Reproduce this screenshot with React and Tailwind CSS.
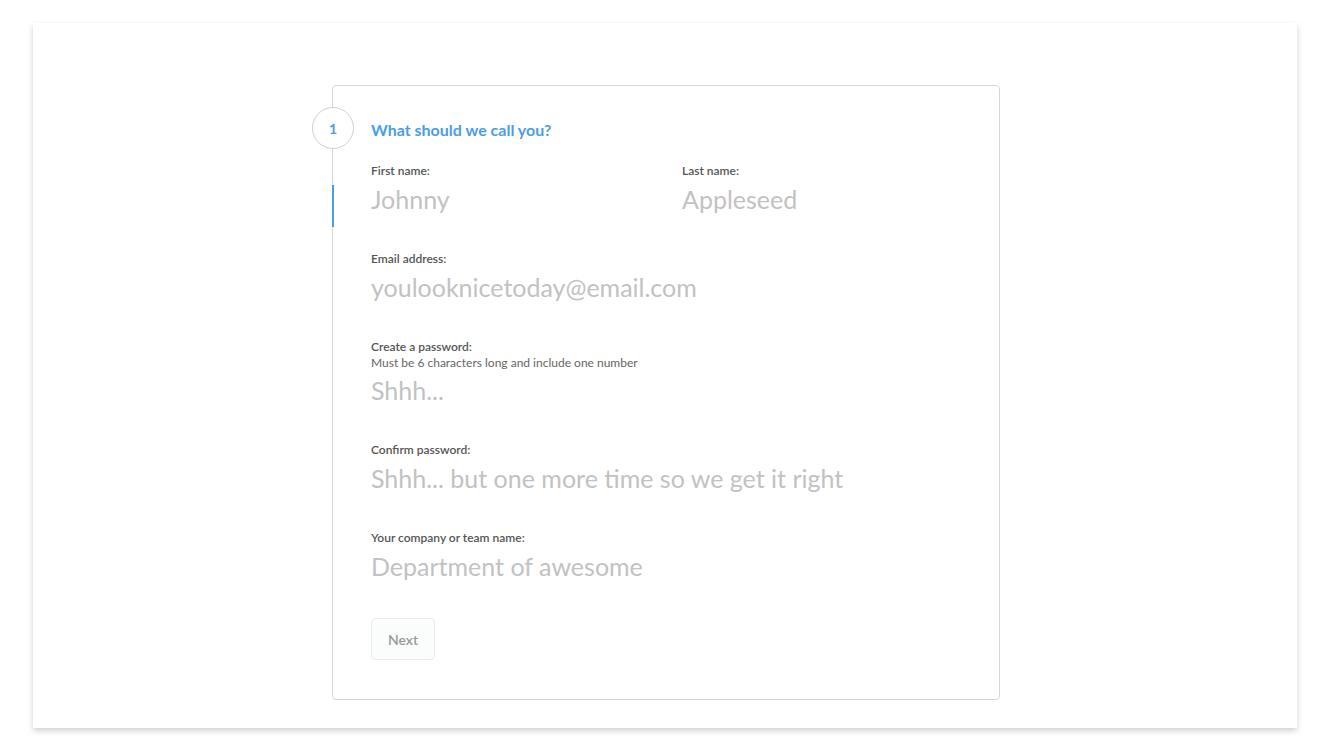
import React from "react";

const Field = ({ label, hint, placeholder, type = "text" }) => {
  return (
    <div className="relative flex flex-col">
      <label className="text-[12px] leading-[16px] font-semibold text-[#555]">{label}</label>
      {hint && <p className="text-[12px] leading-[15px] text-[#666]">{hint}</p>}
      <input
        type={type}
        placeholder={placeholder}
        className="mt-[6px] h-[42px] pb-[14px] w-full bg-transparent text-[25px] text-[#444] placeholder:text-[#c2c2c2] outline-none"
      />
    </div>
  );
};

export default function App() {
  return (
    <div
      className="min-h-[750px] bg-white pt-[23px] pl-[33px]"
      style={{ fontFamily: "Lato, 'Open Sans', sans-serif" }}
    >
      <div className="w-[1264px] h-[705px] bg-white shadow-[0_3px_6px_rgba(0,0,0,0.18)] pt-[62px]">
        {/* Signup step box */}
        <div className="relative ml-[299px] w-[668px] border border-[#d6d6d6] rounded-[4px] pl-[38px] pr-[30px] pt-[34px] pb-[39px]">
          {/* Step number */}
          <div className="absolute left-[-21px] top-[21px] w-[42px] h-[42px] rounded-full border border-[#d0d0d0] bg-white flex items-center justify-center text-[14px] font-bold text-[#4a9de6]">
            1
          </div>
          {/* Active field marker */}
          <span className="absolute left-[-1px] top-[99px] w-[2px] h-[42px] bg-[#4a9de6]" />

          <h2 className="text-[16px] leading-[20px] font-bold text-[#4a9de6]">What should we call you?</h2>

          <div className="mt-[23px] flex flex-col gap-[24px]">
            <div className="grid grid-cols-[311px_1fr]">
              <Field label="First name:" placeholder="Johnny" />
              <Field label="Last name:" placeholder="Appleseed" />
            </div>
            <Field label="Email address:" placeholder="youlooknicetoday@email.com" type="email" />
            <Field
              label="Create a password:"
              hint="Must be 6 characters long and include one number"
              placeholder="Shhh..."
              type="password"
            />
            <Field label="Confirm password:" placeholder="Shhh... but one more time so we get it right" type="password" />
            <Field label="Your company or team name:" placeholder="Department of awesome" />
            <div>
              <button className="h-[42px] w-[64px] rounded-[4px] border border-[#ececec] bg-[#fbfcfc] text-[14px] font-semibold text-[#999]">
                Next
              </button>
            </div>
          </div>
        </div>
      </div>
    </div>
  );
}
